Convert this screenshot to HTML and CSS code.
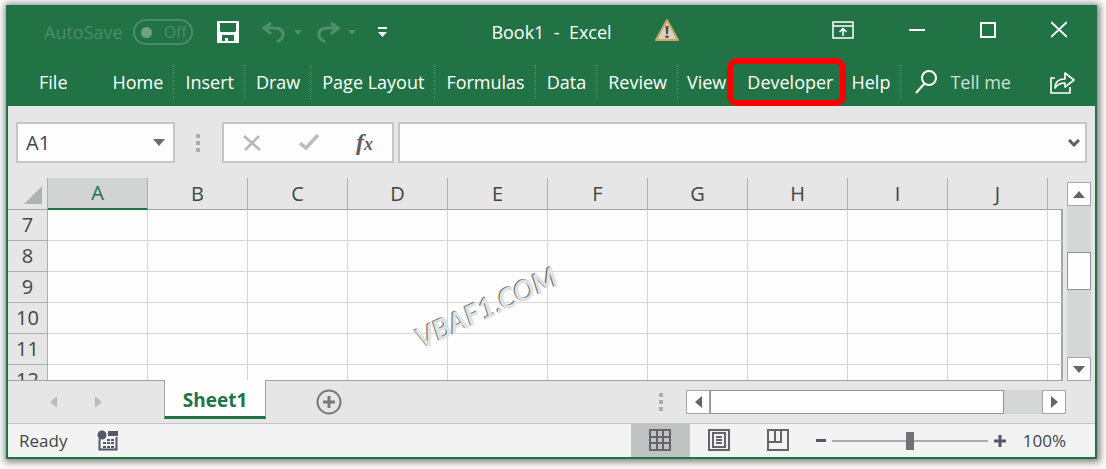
FILE: index.html
```html
<!DOCTYPE html>
<html lang="en">
<head>
<meta charset="utf-8">
<title>Book1 - Excel</title>
<link rel="stylesheet" href="styles.css">
</head>
<body>
<div class="window">
  <header class="ribbon">
    <div class="titlebar">
      <div class="quick">
        <span class="autosave">AutoSave</span>
        <button class="toggle" type="button" aria-label="AutoSave"><span class="knob"></span>Off</button>
        <button class="icon save" type="button" aria-label="Save">
          <svg width="24" height="22" viewBox="0 0 24 22"><path fill="#fff" fill-rule="evenodd" d="M1 0h22v22H1zM4 2v8l1 1h14l1-1V2zM6 14v6h3v-3h3v3h6v-6z"/></svg>
        </button>
        <button class="icon undo" type="button" aria-label="Undo">
          <svg width="24" height="21" viewBox="0 0 24 21" fill="none" stroke="#4f8f6c" stroke-width="3"><path d="M9 1L2 6l7 6M2 6h10c11 0 12 9 3 14"/></svg>
        </button>
        <svg class="caret" width="8" height="5" viewBox="0 0 8 5"><path fill="#4f8f6c" d="M0 0h8L4 5z"/></svg>
        <button class="icon redo" type="button" aria-label="Redo">
          <svg width="24" height="21" viewBox="0 0 24 21" fill="none" stroke="#4f8f6c" stroke-width="3"><path d="M15 1l7 5-7 6M22 6H12C1 6 0 15 9 20"/></svg>
        </button>
        <svg class="caret" width="8" height="5" viewBox="0 0 8 5"><path fill="#4f8f6c" d="M0 0h8L4 5z"/></svg>
        <button class="icon customize" type="button" aria-label="Customize Quick Access Toolbar">
          <svg width="9" height="10" viewBox="0 0 9 10"><path fill="#fff" d="M0 0h9v2H0zM0 5h9L4.500 10z"/></svg>
        </button>
      </div>
      <h1 class="title">Book1&nbsp; -&nbsp; Excel</h1>
      <div class="right">
        <svg class="warn" width="26" height="24" viewBox="0 0 26 24"><path d="M13 2L24 22H2z" fill="#d9d2bd" stroke="#c9a66b" stroke-width="2" stroke-linejoin="round"/><path d="M11.500 8h3l-.5 8h-2zM11.500 17.500h3V20h-3z" fill="#4a4d55"/></svg>
        <div class="controls">
          <button class="icon" type="button" aria-label="Ribbon Display Options">
            <svg width="22" height="18" viewBox="0 0 22 18" fill="none" stroke="#fff" stroke-width="1.500"><path d="M1 1h20v16H1zM1 5h20M11 15V8M7.500 11L11 7.500l3.500 3.500"/></svg>
          </button>
          <button class="icon" type="button" aria-label="Minimize">
            <svg width="16" height="18" viewBox="0 0 16 18"><path fill="#fff" d="M0 8h16v2H0z"/></svg>
          </button>
          <button class="icon" type="button" aria-label="Maximize">
            <svg width="16" height="18" viewBox="0 0 16 18" fill="none" stroke="#fff" stroke-width="2"><path d="M1 2h14v14H1z"/></svg>
          </button>
          <button class="icon" type="button" aria-label="Close">
            <svg width="16" height="18" viewBox="0 0 16 18" fill="none" stroke="#fff" stroke-width="1.800"><path d="M0 1l16 15M16 1L0 16"/></svg>
          </button>
        </div>
      </div>
    </div>
    <nav class="tabs">
      <button class="tab file" type="button">File</button>
      <button class="tab sep" type="button">Home</button>
      <button class="tab sep" type="button">Insert</button>
      <button class="tab sep" type="button">Draw</button>
      <button class="tab sep" type="button">Page Layout</button>
      <button class="tab sep" type="button">Formulas</button>
      <button class="tab sep" type="button">Data</button>
      <button class="tab sep" type="button">Review</button>
      <button class="tab view-tab" type="button">View</button>
      <button class="tab marked" type="button">Developer</button>
      <button class="tab sep" type="button">Help</button>
      <button class="tellme" type="button">
        <svg width="22" height="24" viewBox="0 0 22 24" fill="none" stroke="#fff" stroke-width="2"><circle cx="14" cy="8" r="7"/><path d="M9.500 13.500L1 23"/></svg>
        Tell me
      </button>
      <button class="icon share" type="button" aria-label="Share">
        <svg width="25" height="23" viewBox="0 0 25 23" fill="none" stroke="#fff" stroke-width="1.600"><path d="M5 7H1v15h19v-6"/><path d="M5 17c0-6 4-9 10-9V2l9 7-9 7v-4c-5 0-8 2-10 5z" stroke-linejoin="round"/></svg>
      </button>
    </nav>
  </header>

  <section class="formula">
    <div class="box namebox">
      <input class="name" type="text" value="A1" aria-label="Name Box">
      <button class="icon" type="button" aria-label="Open name list"><svg width="12" height="7" viewBox="0 0 12 7"><path fill="#6d6a6d" d="M0 0h12L6 7z"/></svg></button>
    </div>
    <span class="dots"><i></i><i></i><i></i></span>
    <div class="box actions">
      <button class="icon" type="button" aria-label="Cancel"><svg width="18" height="16" viewBox="0 0 18 16" fill="none" stroke="#b4b8b6" stroke-width="2.500"><path d="M1 1l16 14M16 1L2 15"/></svg></button>
      <button class="icon" type="button" aria-label="Enter"><svg width="20" height="17" viewBox="0 0 20 17" fill="none" stroke="#b9bdbb" stroke-width="3.500"><path d="M1 9l6 5L19 1"/></svg></button>
      <button class="fx" type="button" aria-label="Insert Function">f<small>x</small></button>
    </div>
    <div class="box entry">
      <input class="value" type="text" aria-label="Formula Bar">
      <button class="icon" type="button" aria-label="Expand Formula Bar"><svg width="12" height="8" viewBox="0 0 12 8" fill="none" stroke="#5f5f63" stroke-width="3"><path d="M1 1l5 5 5-5"/></svg></button>
    </div>
  </section>

  <main class="sheet">
    <div class="gridwrap">
      <table class="grid">
        <colgroup><col class="c-head"><col class="c"><col class="c"><col class="c"><col class="c"><col class="c"><col class="c"><col class="c"><col class="c"><col class="c"><col class="c"><col></colgroup>
        <thead><tr><th class="corner"><svg width="18" height="18" viewBox="0 0 18 18"><path fill="#aeb2b0" d="M18 0v18H0z"/></svg></th><th class="active">A</th><th>B</th><th>C</th><th>D</th><th>E</th><th>F</th><th>G</th><th>H</th><th>I</th><th>J</th><th></th></tr></thead>
        <tbody>
          <tr><th>7</th><td></td><td></td><td></td><td></td><td></td><td></td><td></td><td></td><td></td><td></td><td></td></tr>
          <tr><th>8</th><td></td><td></td><td></td><td></td><td></td><td></td><td></td><td></td><td></td><td></td><td></td></tr>
          <tr><th>9</th><td></td><td></td><td></td><td></td><td></td><td></td><td></td><td></td><td></td><td></td><td></td></tr>
          <tr><th>10</th><td></td><td></td><td></td><td></td><td></td><td></td><td></td><td></td><td></td><td></td><td></td></tr>
          <tr><th>11</th><td></td><td></td><td></td><td></td><td></td><td></td><td></td><td></td><td></td><td></td><td></td></tr>
          <tr><th>12</th><td></td><td></td><td></td><td></td><td></td><td></td><td></td><td></td><td></td><td></td><td></td></tr>
        </tbody>
      </table>
      <span class="watermark">VBAF1.COM</span>
    </div>
    <div class="vscroll">
      <button class="arrow" type="button" aria-label="Scroll up"><svg width="12" height="7" viewBox="0 0 12 7"><path fill="#66646a" d="M6 0l6 7H0z"/></svg></button>
      <div class="vtrack"><div class="vthumb"></div></div>
      <button class="arrow" type="button" aria-label="Scroll down"><svg width="12" height="7" viewBox="0 0 12 7"><path fill="#66646a" d="M0 0h12L6 7z"/></svg></button>
    </div>
  </main>

  <section class="sheetbar">
    <div class="sheets">
      <button class="icon prev" type="button" aria-label="Previous sheet"><svg width="7" height="12" viewBox="0 0 7 12"><path fill="#b9bdbb" d="M7 0v12L0 6z"/></svg></button>
      <button class="icon next" type="button" aria-label="Next sheet"><svg width="7" height="12" viewBox="0 0 7 12"><path fill="#b9bdbb" d="M0 0v12l7-6z"/></svg></button>
      <button class="sheettab" type="button">Sheet1</button>
      <button class="icon add" type="button" aria-label="New sheet"><svg width="26" height="26" viewBox="0 0 26 26" fill="none" stroke="#777a78"><circle cx="13" cy="13" r="11.500" stroke-width="2"/><path d="M13 7v12M7 13h12" stroke-width="3"/></svg></button>
    </div>
    <div class="hside">
      <span class="dots"><i></i><i></i><i></i></span>
      <div class="hscroll">
        <button class="arrow" type="button" aria-label="Scroll left"><svg width="7" height="12" viewBox="0 0 7 12"><path fill="#66646a" d="M7 0v12L0 6z"/></svg></button>
        <div class="htrack"><div class="hthumb"></div></div>
        <button class="arrow" type="button" aria-label="Scroll right"><svg width="7" height="12" viewBox="0 0 7 12"><path fill="#66646a" d="M0 0v12l7-6z"/></svg></button>
      </div>
    </div>
  </section>

  <footer class="status">
    <span class="ready">Ready</span>
    <button class="icon macro" type="button" aria-label="Record Macro">
      <svg width="21" height="21" viewBox="0 0 21 21"><path d="M2.500 9v10.500h17V7" fill="none" stroke="#56586a" stroke-width="2"/><circle cx="5" cy="5" r="4.500" fill="#56586a"/><path fill="#56586a" d="M11 1h10v5H11zM10 9h3v2h-3zM14 9h3v2h-3zM6 12h3v2H6zM10 12h3v2h-3zM14 12h3v2h-3zM6 16h3v2H6zM10 16h3v2h-3zM14 16h3v2h-3z"/></svg>
    </button>
    <div class="views">
      <button class="view on" type="button" aria-label="Normal"><svg width="22" height="22" viewBox="0 0 22 22" fill="none" stroke="#66646a" stroke-width="2"><path d="M1 1h20v20H1zM8 1v20M14 1v20M1 8h20M1 14h20"/></svg></button>
      <button class="view" type="button" aria-label="Page Layout view"><svg width="22" height="22" viewBox="0 0 22 22" fill="none" stroke="#66646a" stroke-width="2"><path d="M1 1h20v20H1zM5 4h12v14H5zM8 8h6M8 11h6M8 14h6"/></svg></button>
      <button class="view" type="button" aria-label="Page Break Preview"><svg width="22" height="22" viewBox="0 0 22 22" fill="none" stroke="#66646a" stroke-width="2"><path d="M1 1h20v20H1zM1 13h13V1M8 1v12"/></svg></button>
    </div>
    <div class="zoom">
      <button class="icon" type="button" aria-label="Zoom out"><svg width="10" height="12" viewBox="0 0 10 12"><path fill="#56586a" d="M0 4h10v3H0z"/></svg></button>
      <input class="slider" type="range" min="10" max="190" value="100" aria-label="Zoom">
      <button class="icon" type="button" aria-label="Zoom in"><svg width="12" height="12" viewBox="0 0 12 12"><path fill="#56586a" d="M0 4.500h12v3H0zM4.500 0h3v12h-3z"/></svg></button>
    </div>
    <span class="percent">100%</span>
  </footer>
</div>
</body>
</html>
```
FILE: styles.css
```css
* { box-sizing: border-box; }

body {
  margin: 0;
  height: 100vh;
  padding: 5px 9px 10px 6px;
  background: #fcfcfc;
  font: 18px/24px "Open Sans", "Noto Sans", sans-serif;
  color: #3f4748;
}

button, input {
  margin: 0;
  padding: 0;
  border: 0;
  background: none;
  font: inherit;
  color: inherit;
}

svg { display: block; }
.icon { display: flex; flex: none; }

.window {
  display: flex;
  flex-direction: column;
  height: 100%;
  border: solid #217346;
  border-width: 0 2px 2px;
  background: #e6e6e6;
  box-shadow: 1px 1px 7px 2px rgba(0, 0, 0, .5);
}

/* Title bar */
.ribbon { background: #217346; color: #fff; }

.titlebar {
  display: grid;
  grid-template-columns: 1fr auto 1fr;
  align-items: center;
  height: 54px;
}

.quick { display: flex; align-items: center; padding-left: 36px; }
.autosave { color: #4b8c69; }

.toggle {
  display: flex;
  align-items: center;
  gap: 12px;
  width: 60px;
  height: 26px;
  margin-left: 10px;
  padding-left: 6px;
  border: 2px solid #4b8c69;
  border-radius: 13px;
  color: #4b8c69;
  font-size: 16px;
}

.knob { width: 11px; height: 11px; border-radius: 50%; background: #6fa286; }
.save { margin-left: 23px; }
.undo { margin-left: 22px; }
.redo { margin-left: 14px; }
.caret { margin-left: 8px; }
.customize { margin-left: 22px; }
.title { margin: 0; font-size: 18px; font-weight: 400; }
.right { display: flex; align-items: center; justify-content: space-between; }
.warn { margin: 0 0 4px 42px; }
.controls { display: flex; gap: 55px; padding: 0 28px 5px 0; }

/* Ribbon tabs */
.tabs { display: flex; align-items: center; height: 47px; padding-bottom: 1px; white-space: nowrap; }
.tab { position: relative; height: 34px; padding: 0 10px 0 11px; }
.sep { border-right: 1px dotted #4f9470; }
.file { margin-right: 24px; padding-left: 31px; }
.tab.view-tab { padding: 0 10px 0 9px; }
.tab.marked { padding-right: 7px; }

.marked::after {
  content: "";
  position: absolute;
  inset: -7px -6px -7px -9px;
  border: 6px solid #f00;
  border-radius: 10px;
}

.tellme { display: flex; align-items: center; gap: 13px; padding-left: 14px; color: #cfe0d6; }
.share { margin: 0 20px 0 auto; }

/* Formula bar */
.formula { display: flex; align-items: center; padding: 16px 8px 15px; }
.box { display: flex; align-items: center; height: 41px; border: 2px solid #c3c7c5; background: #fdfdfd; }
.namebox { width: 159px; padding: 0 8px; font-size: 20px; }
.name { flex: 1; min-width: 0; }
.dots { display: grid; gap: 3px; }
.dots i { width: 4px; height: 4px; background: #a9adab; }
.formula .dots { margin: 0 22px 0 21px; }
.actions { justify-content: space-between; width: 172px; padding: 0 19px; }
.fx { font: italic bold 24px/28px "Liberation Serif", serif; color: #5f5f63; }
.fx small { font-size: 18px; }
.entry { flex: 1; margin-left: 4px; padding: 0 5px; }
.value { flex: 1; min-width: 0; }

/* Worksheet */
.sheet { display: flex; flex: 1; min-height: 0; }

.gridwrap {
  position: relative;
  flex: 1;
  overflow: hidden;
  border-bottom: 1px solid #9fa3a1;
}

.grid { width: 100%; table-layout: fixed; border-collapse: separate; border-spacing: 0; font-size: 20px; }
.c-head { width: 40px; }
.c { width: 100px; }
.grid th, .grid td { height: 31px; padding: 0; }
.grid th { font-weight: 400; border-right: 1px solid #abafad; border-bottom: 1px solid #abafad; }
.grid thead th { height: 32px; border-bottom-color: #9fa3a1; }
.grid thead th:last-child { border-right: 0; }
.grid td { border-right: 1px solid #d6d6d6; border-bottom: 1px solid #d6d6d6; background: #fdfdfd; }
.grid td:last-child { border-right: 2px solid #a3a7a5; }
.corner svg { margin: 3px 5px 0 auto; }
.grid thead .active { border-bottom: 2px solid #217346; background: #d2d4d3; color: #217346; }

.watermark {
  position: absolute;
  left: 402px;
  top: 113px;
  color: #dfe2e1;
  font: italic bold 28px/32px Lato, sans-serif;
  text-shadow: -1px -1px 0 #6f7371;
  transform: rotate(-25deg);
}

.vscroll { display: flex; flex-direction: column; width: 24px; margin: 4px 4px 0 4px; }
.arrow {
  display: flex;
  flex: none;
  align-items: center;
  justify-content: center;
  width: 24px;
  height: 24px;
  border: 1px solid #a3a7a5;
  background: #fdfdfd;
}
.vtrack { flex: 1; padding-top: 46px; background: #d5d7d6; }
.vthumb { height: 38px; border: 1px solid #8f9391; background: #fdfdfd; }

/* Sheet tabs and horizontal scroll */
.sheetbar { display: flex; justify-content: space-between; height: 43px; border-bottom: 1px solid #c3c7c5; }
.sheets, .hside { display: flex; align-items: center; }
.prev { margin-left: 42px; }
.next { margin-left: 38px; }
.sheettab {
  position: relative;
  align-self: flex-start;
  width: 102px;
  height: 39px;
  margin: -1px 0 0 62px;
  padding-top: 3px;
  border: solid #9fa3a1;
  border-width: 0 1px;
  border-bottom: 3px solid #217346;
  background: #fdfdfd;
  color: #217346;
  font-size: 19px;
  font-weight: 700;
}
.add { margin-left: 50px; }
.hscroll { display: flex; width: 380px; margin: 0 29px 0 23px; }
.htrack { flex: 1; padding-right: 38px; background: #d5d7d6; }
.hthumb { height: 24px; border: 1px solid #8f9391; background: #fdfdfd; }

/* Status bar */
.status { display: flex; align-items: center; height: 33px; background: #f3f3f3; font-size: 17px; }
.ready { margin-left: 11px; }
.macro { margin-left: 30px; }
.views { display: flex; align-self: stretch; margin-left: auto; }
.view { display: flex; align-items: center; justify-content: center; width: 59px; padding-bottom: 2px; }
.on { background: #bfc3c1; }
.zoom { display: flex; align-items: center; gap: 6px; margin-left: 8px; }

.slider { appearance: none; width: 156px; height: 18px; }
.slider::-webkit-slider-runnable-track { height: 2px; background: #a9adab; }
.slider::-webkit-slider-thumb {
  appearance: none;
  width: 8px;
  height: 18px;
  margin-top: -8px;
  background: #737078;
}
.percent { margin: 0 29px 0 17px; }
```
